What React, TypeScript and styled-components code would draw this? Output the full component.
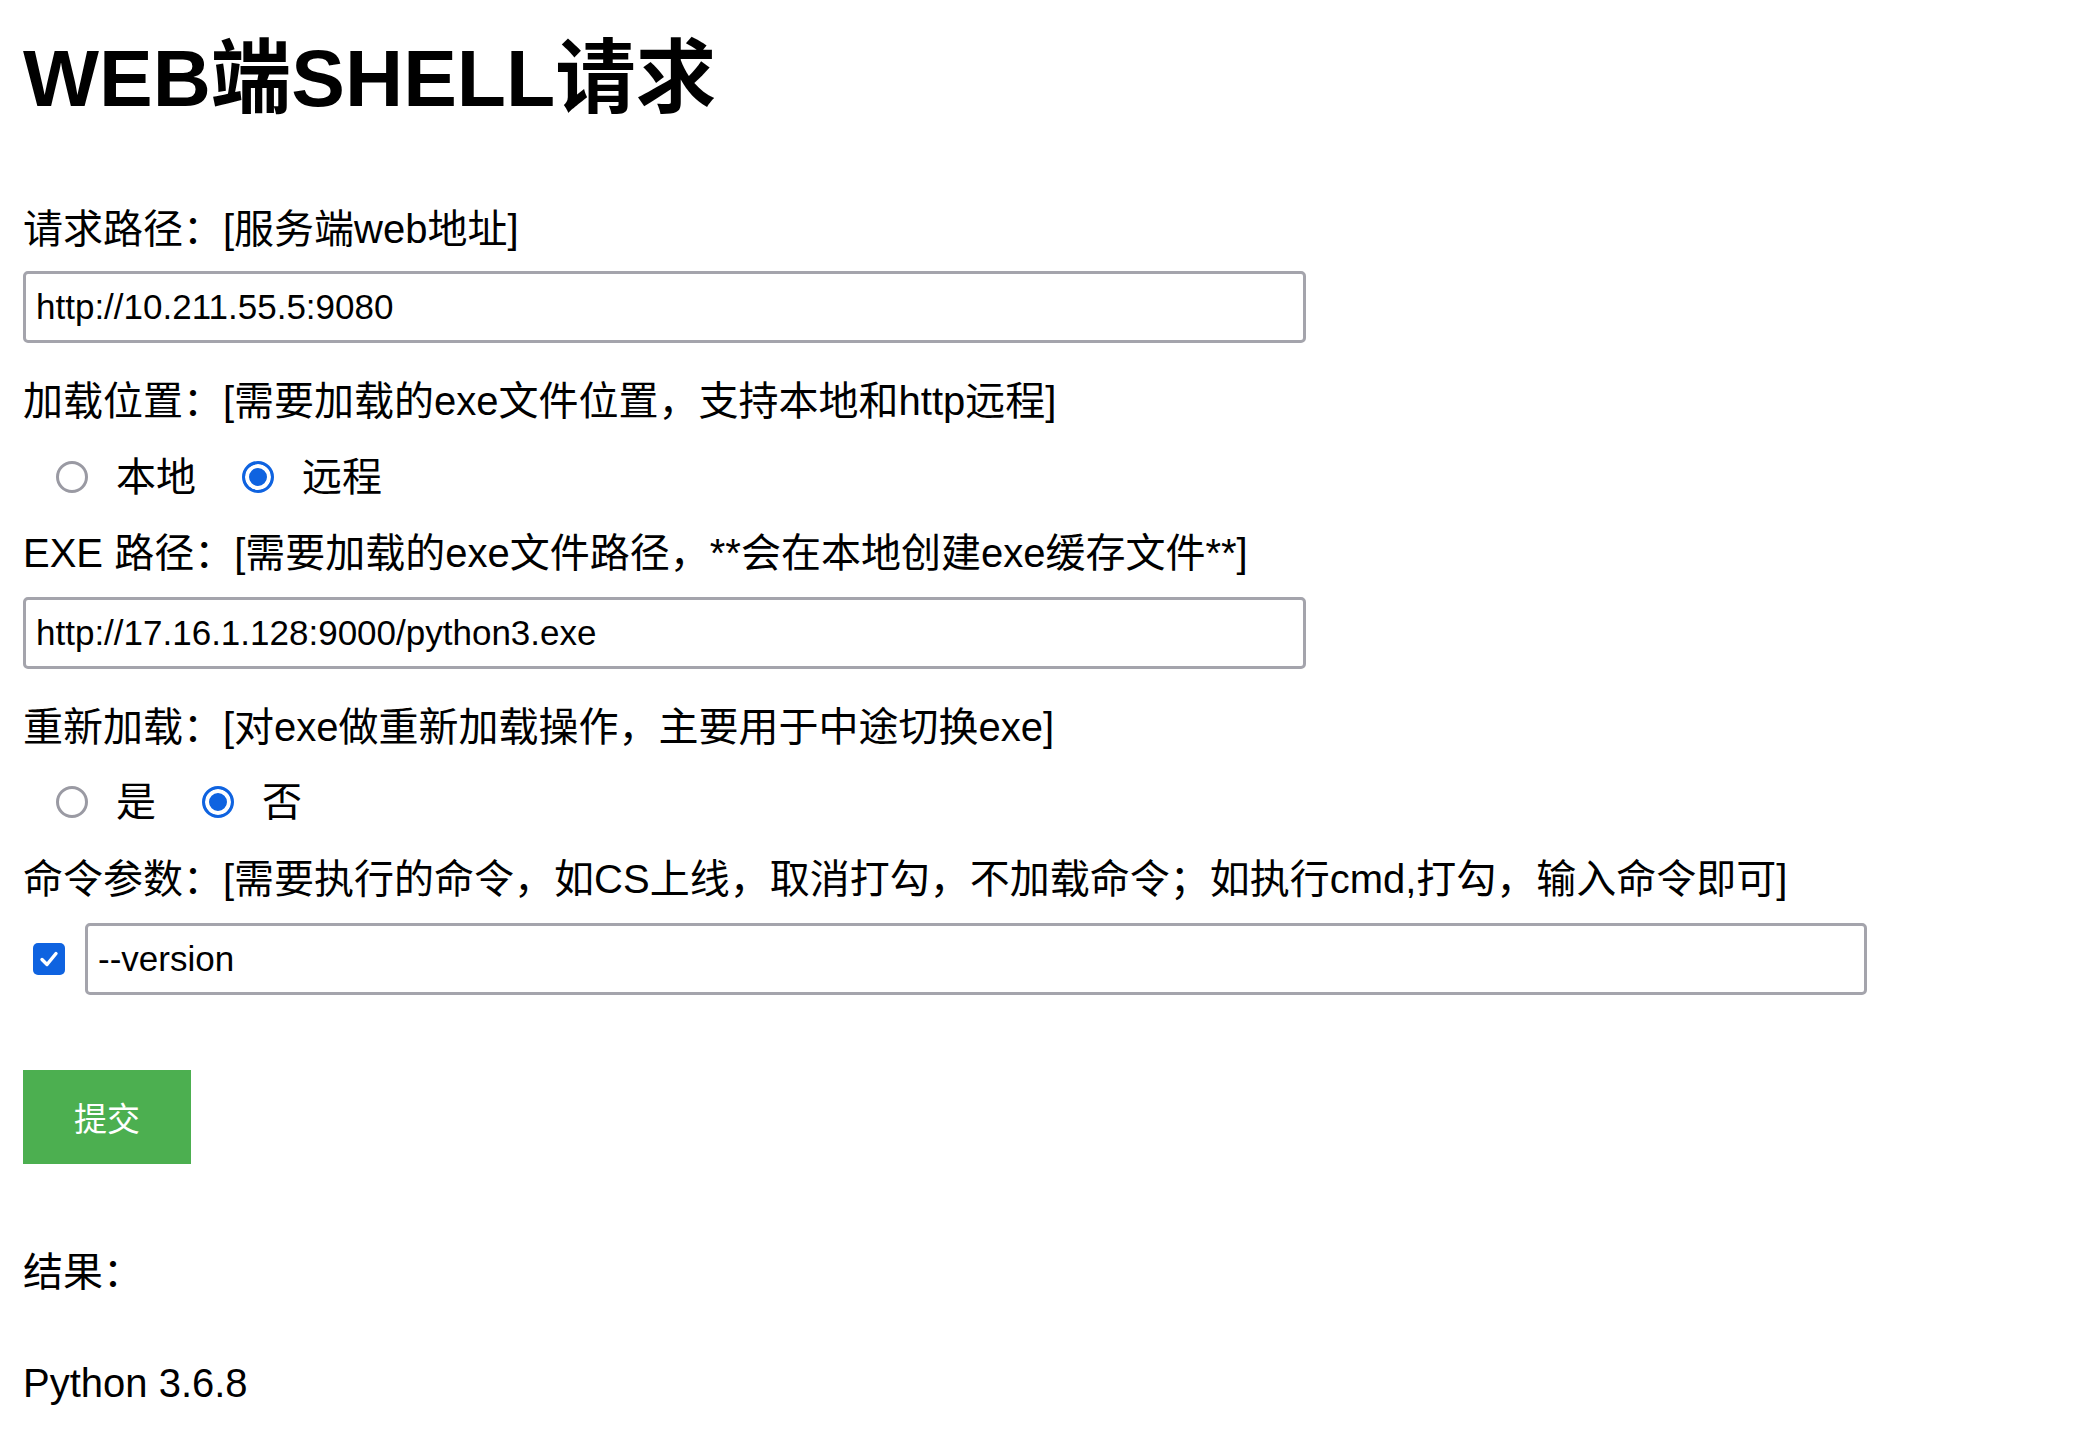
import React, { useState } from "react";
import styled, { createGlobalStyle } from "styled-components";

const GlobalStyle = createGlobalStyle`
  html, body {
    margin: 0;
    padding: 0;
    background: #ffffff;
  }
  body {
    font-family: "Liberation Sans", "Noto Sans CJK SC", sans-serif;
    color: #000000;
  }
`;

const Page = styled.form`
  display: flex;
  flex-direction: column;
  align-items: flex-start;
  padding: 32px 23px 36px 23px;
`;

const Title = styled.h1`
  margin: 0;
  font-size: 80.5px;
  line-height: 92px;
  font-weight: 700;
  font-family: "Liberation Sans", "Noto Sans CJK SC", sans-serif;
`;

const FieldLabel = styled.label<{ $top: number }>`
  display: block;
  margin-top: ${(p) => p.$top}px;
  font-size: 40px;
  line-height: 50px;
  white-space: nowrap;
`;

const TextInput = styled.input<{ $top?: number; $width: number }>`
  box-sizing: border-box;
  width: ${(p) => p.$width}px;
  height: 72px;
  margin: ${(p) => p.$top ?? 0}px 0 0 0;
  padding: 0 10px;
  border: 3px solid #a4a4ac;
  border-radius: 5px;
  background: #ffffff;
  color: #000000;
  font-family: "Liberation Sans", "Noto Sans CJK SC", sans-serif;
  font-size: 35px;
  outline: none;
`;

const RadioRow = styled.div<{ $top: number }>`
  display: flex;
  align-items: center;
  height: 50px;
  margin-top: ${(p) => p.$top}px;
  padding-left: 33px;
  gap: 46px;
`;

const RadioOption = styled.label`
  display: flex;
  align-items: center;
  gap: 28px;
  font-size: 40px;
  line-height: 50px;
  cursor: pointer;
`;

const RadioInput = styled.input.attrs({ type: "radio" })`
  appearance: none;
  -webkit-appearance: none;
  box-sizing: border-box;
  width: 32px;
  height: 32px;
  margin: 0;
  border-radius: 50%;
  border: 3px solid #9a9aa3;
  background: #ffffff;
  cursor: pointer;

  &:checked {
    border-color: #0f63e0;
    background: #0f63e0;
    box-shadow: inset 0 0 0 4px #ffffff;
  }
`;

const CommandRow = styled.div`
  display: flex;
  align-items: center;
  margin-top: 19px;
  height: 71px;
`;

const CheckBox = styled.button<{ $on: boolean }>`
  box-sizing: border-box;
  width: 32px;
  height: 32px;
  margin: 0 20px 0 10px;
  padding: 0;
  border-radius: 5px;
  border: ${(p) => (p.$on ? "none" : "3px solid #9a9aa3")};
  background: ${(p) => (p.$on ? "#0f63e0" : "#ffffff")};
  display: flex;
  align-items: center;
  justify-content: center;
  cursor: pointer;
`;

const SubmitButton = styled.button`
  margin-top: 76px;
  height: 94px;
  padding: 0 51px;
  border: none;
  background: #4caf50;
  color: #ffffff;
  font-family: "Liberation Sans", "Noto Sans CJK SC", sans-serif;
  font-size: 33px;
  cursor: pointer;
`;

const ResultText = styled.div<{ $top: number }>`
  margin-top: ${(p) => p.$top}px;
  font-size: 40px;
  line-height: 50px;
  white-space: nowrap;
`;

export default function App() {
  const [location, setLocation] = useState("remote");
  const [reload, setReload] = useState("no");
  const [useCmd, setUseCmd] = useState(true);

  return (
    <>
      <GlobalStyle />
      <Page onSubmit={(e) => e.preventDefault()}>
        <Title>WEB端SHELL请求</Title>

        <FieldLabel $top={80}>请求路径：[服务端web地址]</FieldLabel>
        <TextInput $top={17} $width={1283} defaultValue="http://10.211.55.5:9080" />

        <FieldLabel $top={33}>加载位置：[需要加载的exe文件位置，支持本地和http远程]</FieldLabel>
        <RadioRow $top={26}>
          <RadioOption>
            <RadioInput
              name="loc"
              checked={location === "local"}
              onChange={() => setLocation("local")}
            />
            本地
          </RadioOption>
          <RadioOption>
            <RadioInput
              name="loc"
              checked={location === "remote"}
              onChange={() => setLocation("remote")}
            />
            远程
          </RadioOption>
        </RadioRow>

        <FieldLabel $top={26}>EXE 路径：[需要加载的exe文件路径，**会在本地创建exe缓存文件**]</FieldLabel>
        <TextInput $top={19} $width={1283} defaultValue="http://17.16.1.128:9000/python3.exe" />

        <FieldLabel $top={33}>重新加载：[对exe做重新加载操作，主要用于中途切换exe]</FieldLabel>
        <RadioRow $top={25}>
          <RadioOption>
            <RadioInput
              name="reload"
              checked={reload === "yes"}
              onChange={() => setReload("yes")}
            />
            是
          </RadioOption>
          <RadioOption>
            <RadioInput
              name="reload"
              checked={reload === "no"}
              onChange={() => setReload("no")}
            />
            否
          </RadioOption>
        </RadioRow>

        <FieldLabel $top={27}>
          命令参数：[需要执行的命令，如CS上线，取消打勾，不加载命令；如执行cmd,打勾，输入命令即可]
        </FieldLabel>
        <CommandRow>
          <CheckBox type="button" $on={useCmd} onClick={() => setUseCmd(!useCmd)} aria-label="启用命令">
            {useCmd && (
              <svg width="22" height="22" viewBox="0 0 22 22">
                <polyline
                  points="4,11.5 9,16.5 18,5.5"
                  fill="none"
                  stroke="#ffffff"
                  strokeWidth="3.4"
                  strokeLinecap="round"
                  strokeLinejoin="round"
                />
              </svg>
            )}
          </CheckBox>
          <TextInput $width={1782} defaultValue="--version" />
        </CommandRow>

        <SubmitButton type="submit">提交</SubmitButton>

        <ResultText $top={83}>结果：</ResultText>
        <ResultText $top={61}>Python 3.6.8</ResultText>
      </Page>
    </>
  );
}
